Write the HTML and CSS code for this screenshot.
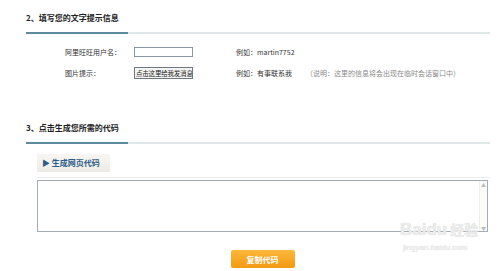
FILE: index.html
```html
<html>
<head>
    <meta http-equiv="Content-Type" content="text/html; charset=utf-8" />
    <link rel="stylesheet" href="styles.css">
</head>

<body>
    <div class="page">
        <!-- 第二步 -->
        <div class="title">2、填写您的文字提示信息</div>
        <div class="rule"><span class="rule-mark"></span></div>

        <div class="form">
            <div class="row">
                <span class="label">阿里旺旺用户名：</span>
                <span class="field"><input class="text" type="text" /></span>
                <span class="example">例如：martin7752</span>
            </div>
            <div class="row">
                <span class="label">图片提示：</span>
                <span class="field"><span class="text tip">点击这里给我发消息</span></span>
                <span class="example">例如：有事联系我</span>
                <span class="note">（说明：这里的信息将会出现在临时会话窗口中）</span>
            </div>
        </div>

        <!-- 第三步 -->
        <div class="title">3、点击生成您所需的代码</div>
        <div class="rule"><span class="rule-mark"></span></div>

        <div class="code">
            <div class="tabs">
                <span class="tab">▶ 生成网页代码</span>
            </div>
            <div class="code-box">
                <div class="code-area"></div>
                <div class="scrollbar">
                    <span class="arrow">▲</span>
                    <span class="arrow">▼</span>
                </div>
            </div>
            <div class="actions">
                <button class="copy">复制代码</button>
            </div>
        </div>
    </div>

    <div class="watermark">
        <div class="wm-logo">Baidu<span class="wm-cn">经验</span></div>
        <div class="wm-url">jingyan.baidu.com</div>
    </div>
</body>
</html>
```

FILE: styles.css
```css
body,
div {
    margin: 0px;
    padding: 0px;
}

body {
    background: #fff;
    font-family: "Noto Sans CJK SC", "Liberation Sans", sans-serif;
    color: #333;
}

.page {
    width: 464px;
    padding-left: 26px;
}

.title {
    padding: 12px 0 8px;
    font-size: 8px;
    line-height: 12px;
    font-weight: bold;
    color: #222;
}

.rule {
    display: flex;
    height: 2px;
    background: #dfe6e8;
}

.rule-mark {
    width: 102px;
    background: #5b8aa1;
}

.form {
    margin: 13px 0 31px;
    padding-left: 39px;
    display: flex;
    flex-direction: column;
    gap: 10px;
    font-size: 7px;
}

.row {
    display: flex;
    align-items: center;
    height: 10px;
}

.row + .row {
    height: 12px;
}

.label {
    width: 69px;
}

.field {
    width: 102px;
}

.text {
    display: block;
    box-sizing: border-box;
    width: 59px;
    height: 10px;
    margin: 0;
    padding: 0;
    border: 1px solid #8c97a4;
    background: #fff;
}

.tip {
    height: 12px;
    border-color: #6f7780;
    background: #f4f4f2;
    overflow: hidden;
    white-space: nowrap;
    font-size: 6.5px;
    letter-spacing: -0.2px;
    line-height: 10px;
    color: #222;
    padding-left: 1px;
}

.example {
    width: 70px;
    color: #333;
}

.note {
    color: #8a8a8a;
}

.code {
    margin-top: 10px;
    padding-left: 11px;
}

.tabs {
    padding-bottom: 5px;
    border-bottom: 1px solid #e8eef0;
}

.tab {
    display: inline-block;
    width: 73px;
    height: 18px;
    box-sizing: border-box;
    padding-left: 5px;
    line-height: 18px;
    font-size: 8px;
    font-weight: bold;
    color: #2c5d86;
    background: linear-gradient(#f7f6f2, #ecebe6);
}

.code-box {
    display: flex;
    width: 451px;
    height: 52px;
    box-sizing: border-box;
    margin-top: 2px;
    border: 1px solid #a3abb3;
    background: #fff;
}

.code-area {
    flex: 1;
}

.scrollbar {
    width: 7px;
    display: flex;
    flex-direction: column;
    justify-content: space-between;
    align-items: center;
    background: #fbfbf8;
    border-left: 1px solid #eeeeea;
}

.arrow {
    font-size: 5px;
    line-height: 7px;
    color: #b9bcbf;
}

.actions {
    display: flex;
    justify-content: center;
    width: 451px;
    margin-top: 18px;
}

.copy {
    width: 64px;
    height: 18px;
    border: none;
    border-radius: 2px;
    background: linear-gradient(#fdb73c, #f39a12);
    color: #fff;
    font-family: "Noto Sans CJK SC", sans-serif;
    font-size: 8px;
    font-weight: bold;
    padding: 0;
}

.watermark {
    position: absolute;
    left: 400px;
    top: 218px;
    color: #ececec;
    text-shadow: 0 0 1px #cfcfcf;
    font-family: "Liberation Sans", "Noto Sans CJK SC", sans-serif;
}

.wm-logo {
    font-size: 17px;
    line-height: 24px;
    font-weight: bold;
}

.wm-cn {
    font-size: 14px;
    margin-left: 3px;
}

.wm-url {
    font-size: 8px;
    line-height: 12px;
    padding-left: 3px;
}
```
